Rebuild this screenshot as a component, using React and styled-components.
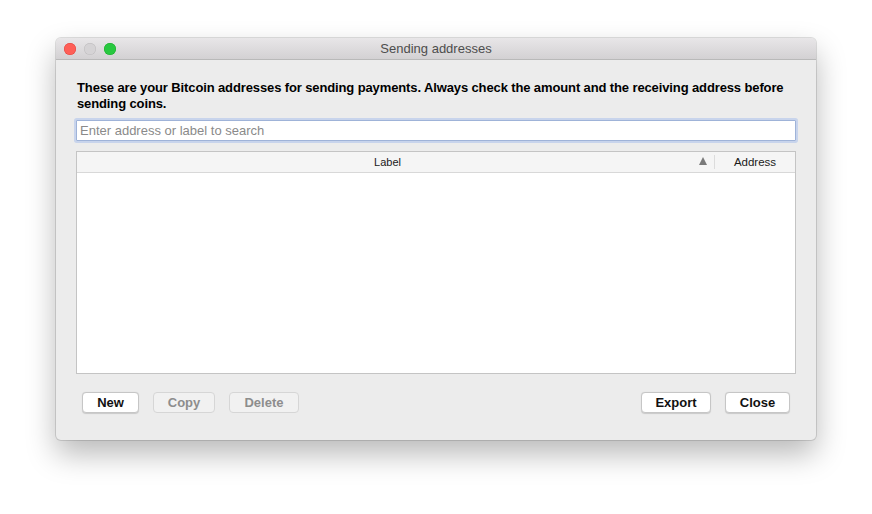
import React from 'react';
import styled, { createGlobalStyle } from 'styled-components';

const Global = createGlobalStyle`
  html, body {
    margin: 0;
    padding: 0;
    background: #fff;
    font-family: "Liberation Sans", Arial, sans-serif;
  }
`;

const Page = styled.div`
  width: 872px;
  height: 514px;
  padding: 38px 0 0 56px;
  box-sizing: border-box;
`;

const Window = styled.div`
  width: 760px;
  height: 402px;
  border-radius: 5px;
  background: #ececec;
  box-shadow: 0 0 0 1px rgba(0,0,0,0.12), 0 14px 30px rgba(0,0,0,0.28);
  display: flex;
  flex-direction: column;
  overflow: hidden;
`;

const TitleBar = styled.div`
  height: 21px;
  flex: none;
  display: flex;
  align-items: center;
  position: relative;
  background: linear-gradient(#e8e6e8, #d3d1d3);
  border-bottom: 1px solid #b9b9b9;
`;

const Lights = styled.div`
  display: flex;
  gap: 8px;
  padding-left: 8px;
`;

const Light = styled.span`
  width: 12px;
  height: 12px;
  border-radius: 50%;
  background: ${p => p.$c};
  box-shadow: inset 0 0 0 0.5px ${p => p.$b};
`;

const Title = styled.div`
  position: absolute;
  left: 0;
  right: 0;
  text-align: center;
  font-size: 13px;
  color: #4d4d4d;
  pointer-events: none;
`;

const Body = styled.div`
  flex: 1;
  display: flex;
  flex-direction: column;
  padding: 20px 20px 0 20px;
`;

const Intro = styled.p`
  margin: 0 0 0 1px;
  font-size: 13px;
  line-height: 16px;
  color: #000;
  font-weight: 600;
  letter-spacing: -0.12px;
`;

const Search = styled.input`
  margin-top: 8px;
  height: 21px;
  box-sizing: border-box;
  border: 1px solid #9fb3d8;
  box-shadow: 0 0 0 2px #c8d4ec;
  border-radius: 1px;
  padding: 0 3px;
  font-family: inherit;
  font-size: 13px;
  outline: none;
  background: #fff;
  &::placeholder { color: #8a8a8a; }
`;

const Table = styled.div`
  margin-top: 10px;
  height: 223px;
  box-sizing: border-box;
  border: 1px solid #c4c4c4;
  background: #fff;
  display: flex;
  flex-direction: column;
`;

const Header = styled.div`
  height: 20px;
  display: grid;
  grid-template-columns: 1fr 81px;
  background: #f5f5f5;
  border-bottom: 1px solid #d8d8d8;
`;

const HeadCell = styled.div`
  position: relative;
  display: flex;
  align-items: center;
  justify-content: center;
  font-size: ${p => (p.$divider ? '11.5px' : '11px')};
  color: #1a1a1a;
  padding-right: ${p => (p.$divider ? '0' : '16px')};
  border-left: ${p => (p.$divider ? '1px solid #dcdcdc' : 'none')};
  margin: ${p => (p.$divider ? '3px 0' : '0')};
`;

const SortArrow = styled.span`
  position: absolute;
  right: 7px;
  top: 5px;
  width: 0;
  height: 0;
  border-left: 4px solid transparent;
  border-right: 4px solid transparent;
  border-bottom: 8px solid #7a7a7a;
`;

const Buttons = styled.div`
  display: flex;
  align-items: center;
  margin-top: 18px;
  padding: 0 6px;
`;

const Group = styled.div`
  display: flex;
  gap: 14px;
  margin-left: ${p => (p.$right ? 'auto' : '0')};
`;

const Button = styled.button`
  width: ${p => p.$w}px;
  height: 21px;
  box-sizing: border-box;
  border: 1px solid ${p => (p.disabled ? '#d6d6d6' : '#c6c6c6')};
  border-radius: 4px;
  background: ${p => (p.disabled ? '#f1f1f1' : '#fff')};
  box-shadow: ${p => (p.disabled ? 'none' : '0 0.5px 1px rgba(0,0,0,0.15)')};
  font-family: inherit;
  font-size: 13px;
  font-weight: 600;
  color: ${p => (p.disabled ? '#8d8d8d' : '#111')};
  padding: 0;
`;

export default function App() {
  return (
    <Page>
      <Global />
      <Window>
        <TitleBar>
          <Lights>
            <Light $c="#fe5f57" $b="#e1443e" />
            <Light $c="#d5d3d5" $b="#bdbbbd" />
            <Light $c="#28c840" $b="#1aab29" />
          </Lights>
          <Title>Sending addresses</Title>
        </TitleBar>
        <Body>
          <Intro>
            These are your Bitcoin addresses for sending payments. Always check the amount and the receiving address before sending coins.
          </Intro>
          <Search placeholder="Enter address or label to search" />
          <Table>
            <Header>
              <HeadCell>
                Label
                <SortArrow />
              </HeadCell>
              <HeadCell $divider>Address</HeadCell>
            </Header>
          </Table>
          <Buttons>
            <Group>
              <Button $w={57}>New</Button>
              <Button $w={62} disabled>Copy</Button>
              <Button $w={70} disabled>Delete</Button>
            </Group>
            <Group $right>
              <Button $w={70}>Export</Button>
              <Button $w={65}>Close</Button>
            </Group>
          </Buttons>
        </Body>
      </Window>
    </Page>
  );
}
